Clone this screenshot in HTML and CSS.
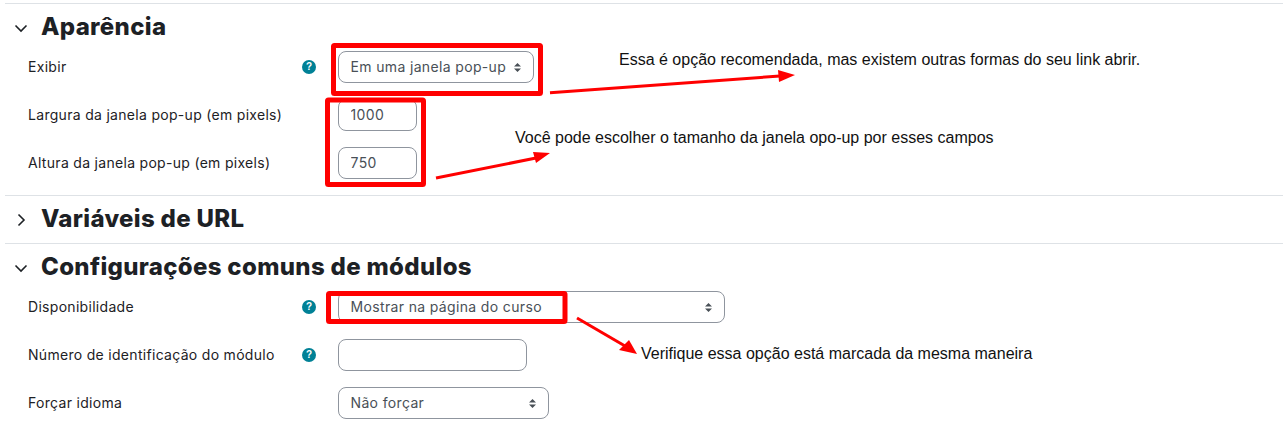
FILE: index.html
```html
<!DOCTYPE html>
<html lang="pt-BR">
<head>
<meta charset="utf-8">
<title>Configurações</title>
<link rel="stylesheet" href="styles.css">
</head>
<body>
<main class="form">
  <section class="sec">
    <header class="sec-head">
      <svg class="chev" viewBox="0 0 14 14"><path d="M1.500 4.500 7 10 12.500 4.500"/></svg>
      <h2>Aparência</h2>
    </header>
    <div class="row">
      <label class="lbl">Exibir</label>
      <span class="help-slot"><svg class="help" viewBox="0 0 14 14"><circle cx="7" cy="7" r="7"/><text x="7" y="10.4" text-anchor="middle">?</text></svg></span>
      <select class="ctl w196"><option>Em uma janela pop-up</option></select>
    </div>
    <div class="row">
      <label class="lbl">Largura da janela pop-up (em pixels)</label>
      <span class="help-slot"></span>
      <input class="ctl w79" value="1000">
    </div>
    <div class="row">
      <label class="lbl">Altura da janela pop-up (em pixels)</label>
      <span class="help-slot"></span>
      <input class="ctl w79" value="750">
    </div>
  </section>
  <section class="sec">
    <header class="sec-head">
      <svg class="chev" viewBox="0 0 14 14"><path d="M4.500 1.500 10 7 4.500 12.500"/></svg>
      <h2>Variáveis de URL</h2>
    </header>
  </section>
  <section class="sec">
    <header class="sec-head">
      <svg class="chev" viewBox="0 0 14 14"><path d="M1.500 4.500 7 10 12.500 4.500"/></svg>
      <h2>Configurações comuns de módulos</h2>
    </header>
    <div class="row">
      <label class="lbl">Disponibilidade</label>
      <span class="help-slot"><svg class="help" viewBox="0 0 14 14"><circle cx="7" cy="7" r="7"/><text x="7" y="10.4" text-anchor="middle">?</text></svg></span>
      <select class="ctl w387"><option>Mostrar na página do curso</option></select>
    </div>
    <div class="row">
      <label class="lbl">Número de identificação do módulo</label>
      <span class="help-slot"><svg class="help" viewBox="0 0 14 14"><circle cx="7" cy="7" r="7"/><text x="7" y="10.4" text-anchor="middle">?</text></svg></span>
      <input class="ctl w189" value="">
    </div>
    <div class="row">
      <label class="lbl">Forçar idioma</label>
      <span class="help-slot"></span>
      <select class="ctl w211"><option>Não forçar</option></select>
    </div>
  </section>
</main>

<svg class="marks" width="1283" height="426" viewBox="0 0 1283 426">
  <rect x="333.500" y="45.500" width="207" height="48" rx="1"/>
  <rect x="327.500" y="100" width="96" height="84.500" rx="1"/>
  <rect x="328.500" y="293.500" width="236.500" height="28" rx="1"/>
  <path class="ln" d="M550 92.700 780 76"/>
  <path class="hd" d="M795 75 778 70 779 82Z"/>
  <path class="ln" d="M436 178 536 158"/>
  <path class="hd" d="M550 153 533 152 536 163Z"/>
  <path class="ln" d="M577 318 625 346"/>
  <path class="hd" d="M637 354 629 340 619 350Z"/>
</svg>
<p class="note n1">Essa é opção recomendada, mas existem outras formas do seu link abrir.</p>
<p class="note n2">Você pode escolher o tamanho da janela opo-up por esses campos</p>
<p class="note n3">Verifique essa opção está marcada da mesma maneira</p>
</body>
</html>
```
FILE: styles.css
```css
* { box-sizing: border-box; }
html, body { margin: 0; padding: 0; background: #fff; }
body {
  width: 1283px;
  height: 426px;
  overflow: hidden;
  position: relative;
  color: #1d2125;
  font-family: Inter, "Liberation Sans", sans-serif;
}
.form { padding: 3px 0 0 5px; }
.sec { border-top: 1px solid #dee2e6; }
.sec-head {
  height: 47px;
  display: flex;
  align-items: center;
}
.chev {
  width: 14px;
  height: 14px;
  margin-left: 9px;
  margin-right: 14px;
  flex: none;
}
.chev path { fill: none; stroke: #1d2125; stroke-width: 1.6; }
h2 {
  margin: -2px 0 0 -1px;
  font-size: 24px;
  font-weight: 800;
  line-height: 1;
  letter-spacing: .33px;
  color: #1d2125;
}
.row {
  display: flex;
  align-items: center;
  height: 32px;
  margin: 0 0 16px 23px;
}
.lbl {
  width: 274px;
  font-size: 14px;
  letter-spacing: .3px;
  flex: none;
  position: relative;
  top: -1px;
}
.help-slot { width: 36px; flex: none; display: flex; align-items: center; }
.help { width: 14px; height: 14px; }
.help circle { fill: #008196; }
.help text { fill: #fff; font: 700 10px "Liberation Sans", sans-serif; }
.ctl {
  height: 32px;
  border: 1px solid #8f959e;
  border-radius: 8px;
  background-color: #fff;
  color: #495057;
  font-family: Inter, "Liberation Sans", sans-serif;
  font-size: 14px;
  letter-spacing: .35px;
  padding: 0 12px 2px 11.500px;
  margin: 0;
  outline: none;
}
select.ctl {
  appearance: none;
  background-image: url("data:image/svg+xml,%3Csvg xmlns='http://www.w3.org/2000/svg' width='7' height='9' viewBox='0 0 7 9'%3E%3Cpath fill='%23495057' d='M3.500 0 7 3.600H0ZM3.500 9 0 5.400H7Z'/%3E%3C/svg%3E");
  background-repeat: no-repeat;
  background-position: right 12px center;
}
.w79 { width: 79px; }
.w189 { width: 189px; }
.w196 { width: 196px; }
.w211 { width: 211px; }
.w387 { width: 387px; }
.marks { position: absolute; left: 0; top: 0; pointer-events: none; }
.marks rect { fill: none; stroke: #f00; stroke-width: 5; }
.marks .ln { fill: none; stroke: #f00; stroke-width: 3; }
.marks .hd { fill: #f00; }
.note {
  position: absolute;
  margin: 0;
  font-family: "Liberation Sans", Arial, sans-serif;
  font-size: 16px;
  line-height: 18px;
  color: #111;
  white-space: nowrap;
}
.n1 { left: 619px; top: 51px; }
.n2 { left: 515px; top: 129px; }
.n3 { left: 641px; top: 345px; }
```
